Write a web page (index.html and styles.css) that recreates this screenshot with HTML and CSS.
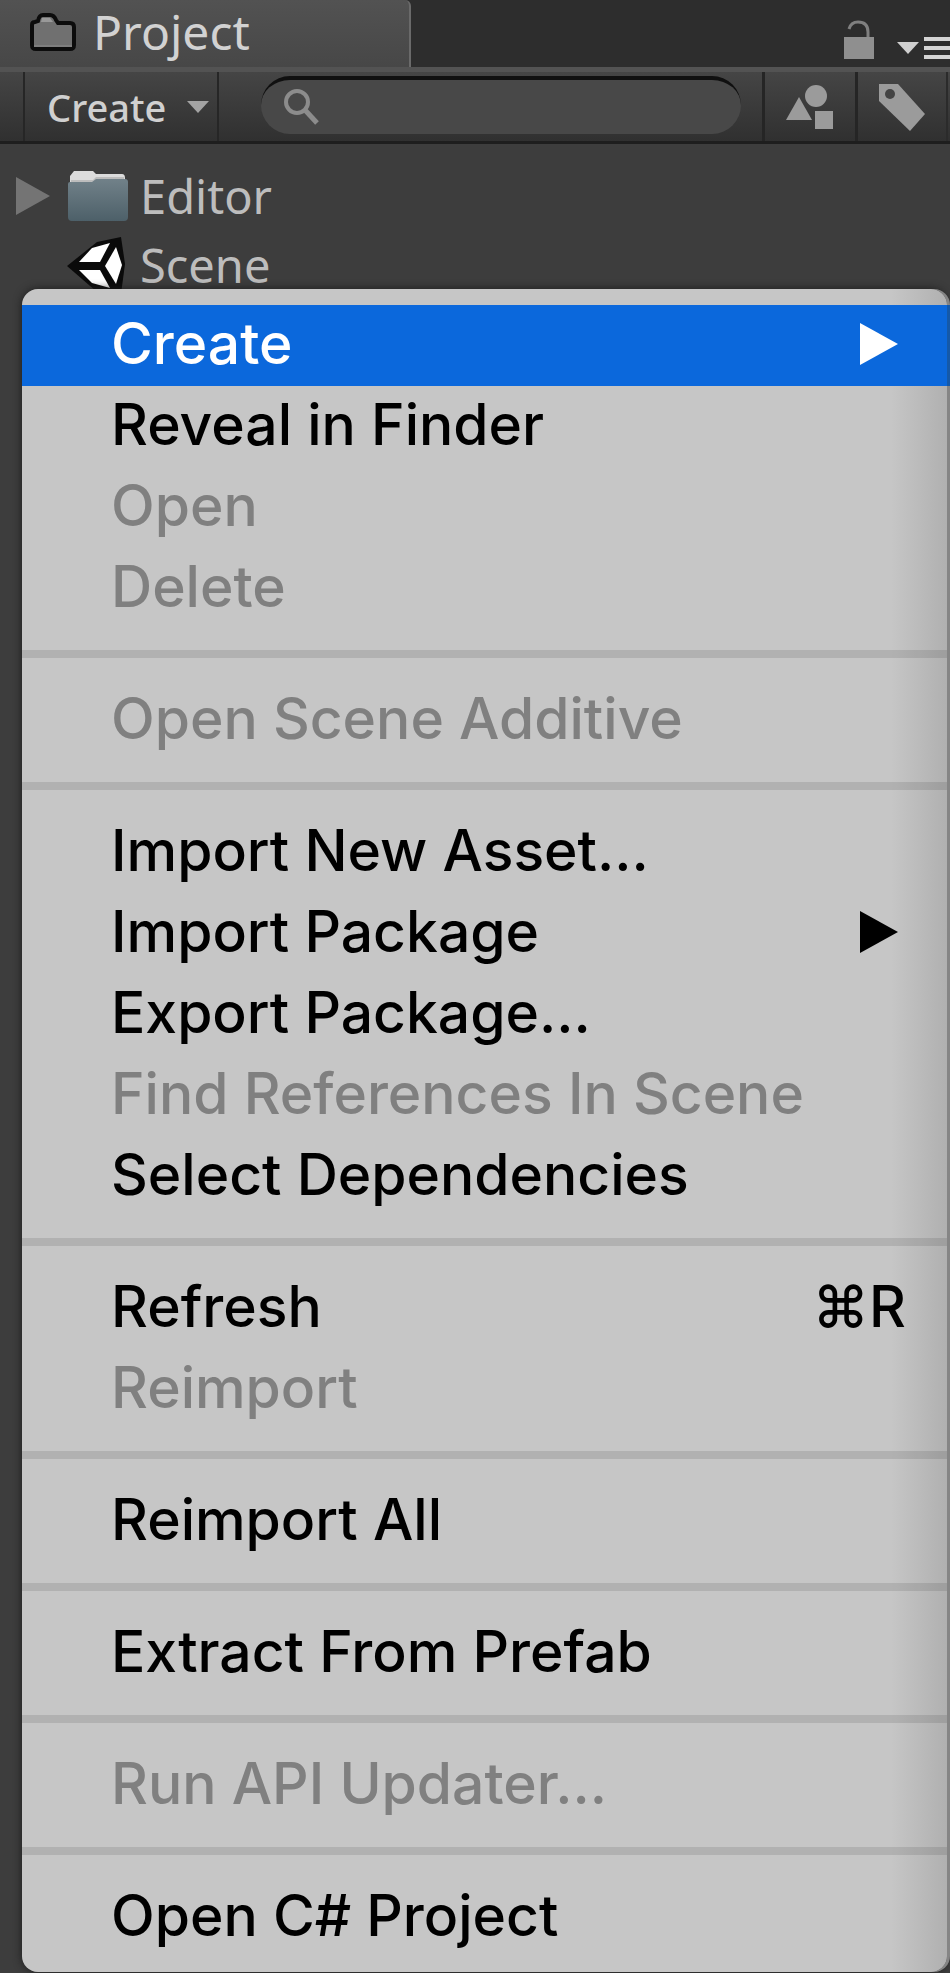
FILE: index.html
```html
<!DOCTYPE html>
<html lang="en">
<head>
  <meta charset="utf-8">
  <title>Project</title>
  <link rel="stylesheet" href="styles.css">
</head>
<body>
  <div class="panel">
    <div class="tab-bar">
      <button class="tab">
        <svg width="48" height="40" viewBox="0 0 48 40">
          <path d="M3 13 Q3 10 6 10 L9 9 Q10 3 14 3 L21 3 Q25 3 27 8 L29 11 L41 11 Q45 11 45 15 L45 33 Q45 37 41 37 L7 37 Q3 37 3 33 Z" fill="#707070" stroke="#0c0c0c" stroke-width="4"/>
          <path d="M13 6 L21 6 L24 10 L12 10 Z" fill="#999"/>
          <path d="M5 34 H43" stroke="#7e7e7e" stroke-width="2"/>
        </svg>
        Project
      </button>
      <div class="tab-actions">
        <button aria-label="Lock">
          <svg width="32" height="40" viewBox="0 0 32 40">
            <path d="M6 9 Q8 2 15 2 Q25 2 25 12 L25 19" fill="none" stroke="#808080" stroke-width="3"/>
            <rect x="1" y="17" width="30" height="22" fill="#8f8f8f"/>
          </svg>
        </button>
        <button aria-label="Panel menu">
          <svg width="54" height="24" viewBox="0 0 54 24">
            <path d="M1 6 H23 L12 18 Z" fill="#cfcfcf"/>
            <path d="M28 3 H54 M28 12 H54 M28 21 H54" stroke="#d4d4d4" stroke-width="4"/>
          </svg>
        </button>
      </div>
    </div>

    <div class="toolbar">
      <button class="create-button">
        Create
        <svg width="22" height="14" viewBox="0 0 22 14"><path d="M0 1 H22 L11 13 Z" fill="#a3a3a3"/></svg>
      </button>
      <label class="search">
        <svg width="36" height="38" viewBox="0 0 36 38" fill="none" stroke="#8c8c8c">
          <circle cx="14" cy="14" r="11" stroke-width="4"/>
          <path d="M22 22 L34 35" stroke-width="5"/>
        </svg>
        <input type="text" aria-label="Search">
      </label>
      <button class="filter-button" aria-label="Search by type">
        <svg width="48" height="46" viewBox="0 0 48 46" fill="#9b9b9b">
          <path d="M13 13 L26 36 H0 Z"/>
          <circle cx="30" cy="12" r="11"/>
          <rect x="29" y="27" width="18" height="18"/>
        </svg>
      </button>
      <button class="filter-button" aria-label="Search by label">
        <svg width="48" height="48" viewBox="0 0 48 48">
          <path d="M1 1 H20 L47 31 L32 48 L1 18 Z" fill="#9b9b9b"/>
          <circle cx="12" cy="11" r="5" fill="#444"/>
        </svg>
      </button>
    </div>

    <ul class="tree">
      <li class="tree-row">
        <svg class="arrow" width="34" height="38" viewBox="0 0 34 38"><path d="M0 0 L34 19 L0 38 Z" fill="#747474"/></svg>
        <svg class="tree-icon" width="62" height="54" viewBox="0 0 62 54">
          <defs>
            <linearGradient id="folder" x1="0" y1="0" x2="0" y2="1">
              <stop offset="0" stop-color="#718189"/>
              <stop offset="1" stop-color="#4d6069"/>
            </linearGradient>
          </defs>
          <path d="M3 14 V7 L7 2 H26 L29 5 H55 Q58 5 58 9 V16 H3 Z" fill="#dcdcdc"/>
          <path d="M4 11 H26 L29 8 H57 V16 H4 Z" fill="#bdbdbd"/>
          <path d="M1 15 Q1 13 3 13 H25 L29 10 H58 Q61 10 61 13 V48 Q61 52 57 52 H5 Q1 52 1 48 Z" fill="url(#folder)"/>
        </svg>
        Editor
      </li>
      <li class="tree-row">
        <span class="arrow"></span>
        <svg class="tree-icon" width="62" height="58" viewBox="0 0 62 58">
          <path d="M0 30 L30 6 L54 1 L58 28 L54 58 L30 56 Z" fill="#0a0a0a"/>
          <path d="M12 26 L25 12 L43 7 L33 26 Z" fill="#fff"/>
          <path d="M12 34 L33 34 L43 52 L25 47 Z" fill="#fff"/>
          <path d="M49 11 L55 29 L49 48 L38 30 Z" fill="#fff"/>
        </svg>
        Scene
      </li>
    </ul>

    <div class="menu" role="menu">
      <button class="menu-item active" role="menuitem">Create
        <svg width="38" height="42" viewBox="0 0 38 42"><path d="M0 0 L38 21 L0 42 Z" fill="currentColor"/></svg>
      </button>
      <button class="menu-item" role="menuitem">Reveal in Finder</button>
      <button class="menu-item" role="menuitem" disabled>Open</button>
      <button class="menu-item" role="menuitem" disabled>Delete</button>
      <hr>
      <button class="menu-item" role="menuitem" disabled>Open Scene Additive</button>
      <hr>
      <button class="menu-item" role="menuitem">Import New Asset...</button>
      <button class="menu-item" role="menuitem">Import Package
        <svg width="38" height="42" viewBox="0 0 38 42"><path d="M0 0 L38 21 L0 42 Z" fill="currentColor"/></svg>
      </button>
      <button class="menu-item" role="menuitem">Export Package...</button>
      <button class="menu-item" role="menuitem" disabled>Find References In Scene</button>
      <button class="menu-item" role="menuitem">Select Dependencies</button>
      <hr>
      <button class="menu-item" role="menuitem">Refresh <span class="shortcut">⌘R</span></button>
      <button class="menu-item" role="menuitem" disabled>Reimport</button>
      <hr>
      <button class="menu-item" role="menuitem">Reimport All</button>
      <hr>
      <button class="menu-item" role="menuitem">Extract From Prefab</button>
      <hr>
      <button class="menu-item" role="menuitem" disabled>Run API Updater...</button>
      <hr>
      <button class="menu-item" role="menuitem">Open C# Project</button>
    </div>
  </div>
</body>
</html>
```

FILE: styles.css
```css
* {
  margin: 0;
  padding: 0;
  box-sizing: border-box;
}

body {
  background-color: #3d3d3d;
  color: #c4c4c4;
  font-family: "Noto Sans", "Open Sans", sans-serif;
}

button {
  border: none;
  background: none;
  color: inherit;
  font: inherit;
}

svg {
  display: block;
  flex: none;
}

.panel {
  position: relative;
  min-height: 100vh;
  overflow: hidden;
}

/* Tab bar */
.tab-bar {
  display: flex;
  justify-content: space-between;
  height: 67px;
  background-color: #2d2d2d;
}

.tab {
  display: flex;
  align-items: center;
  gap: 16px;
  width: 411px;
  padding: 0 29px 4px;
  border-right: 2px solid #6a6a6a;
  border-top-right-radius: 6px;
  background: linear-gradient(#525252, #474747);
  font-size: 48px;
  line-height: 60px;
  color: #d2d2d2;
}

.tab-actions {
  display: flex;
  align-items: flex-end;
  gap: 21px;
  padding-bottom: 7px;
}

/* Toolbar */
.toolbar {
  display: flex;
  height: 77px;
  padding: 0 2px 0 23px;
  border-top: 5px solid #535353;
  border-bottom: 3px solid #1e1e1e;
  background: linear-gradient(#454545, #303030);
}

.create-button {
  display: flex;
  flex: none;
  align-items: center;
  justify-content: space-between;
  width: 196px;
  padding: 0 8px 0 22px;
  border-left: 2px solid #262626;
  border-right: 2px solid #262626;
  font-size: 38px;
  font-weight: 500;
  color: #d0d0d0;
}

.search {
  display: flex;
  flex: 1;
  align-items: center;
  gap: 12px;
  min-width: 0;
  height: 58px;
  margin: 4px 21px 0 42px;
  padding: 0 22px;
  border-top: 4px solid #101010;
  border-radius: 29px;
  background-color: #484848;
}

.search input {
  width: 100%;
  min-width: 0;
  border: none;
  outline: none;
  background: none;
  color: #d0d0d0;
  font: inherit;
  font-size: 32px;
}

.filter-button {
  display: flex;
  flex: none;
  align-items: center;
  justify-content: center;
  width: 93px;
  border-left: 3px solid #252525;
}

.filter-button:last-child {
  border-right: 2px solid #2b2b2b;
}

/* Asset tree */
.tree {
  padding: 17px 16px;
  list-style: none;
}

.tree-row {
  display: flex;
  align-items: center;
  height: 69px;
  font-size: 47px;
  color: #bdbdbd;
}

.arrow {
  width: 34px;
  margin-right: 17px;
}

.tree-icon {
  margin-right: 11px;
}

/* Context menu, opened over the tree */
.menu {
  position: absolute;
  top: 289px;
  left: 22px;
  right: 3px;
  padding: 16px 0 14px;
  border-radius: 16px;
  background: linear-gradient(to left, #b0b0b0, #c6c6c6 56px);
  box-shadow: 3px 0 0 #858585, 0 0 8px #1c1c1c;
  font-family: Inter, "Liberation Sans", sans-serif;
  font-size: 57px;
  font-weight: 500;
  color: #000;
}

.menu-item {
  display: flex;
  align-items: center;
  justify-content: space-between;
  width: 100%;
  height: 81px;
  padding: 0 49px 4px 89px;
  text-align: left;
}

.menu-item.active {
  background-color: #0b68dc;
  box-shadow: 3px 0 0 #1559a8;
  color: #fff;
}

.menu-item:disabled {
  color: #808080;
}

.menu hr {
  height: 8px;
  margin: 21px 0 22px;
  border: none;
  background-color: rgba(0, 0, 0, 0.1);
}

.shortcut {
  margin-right: -8px;
}
```
